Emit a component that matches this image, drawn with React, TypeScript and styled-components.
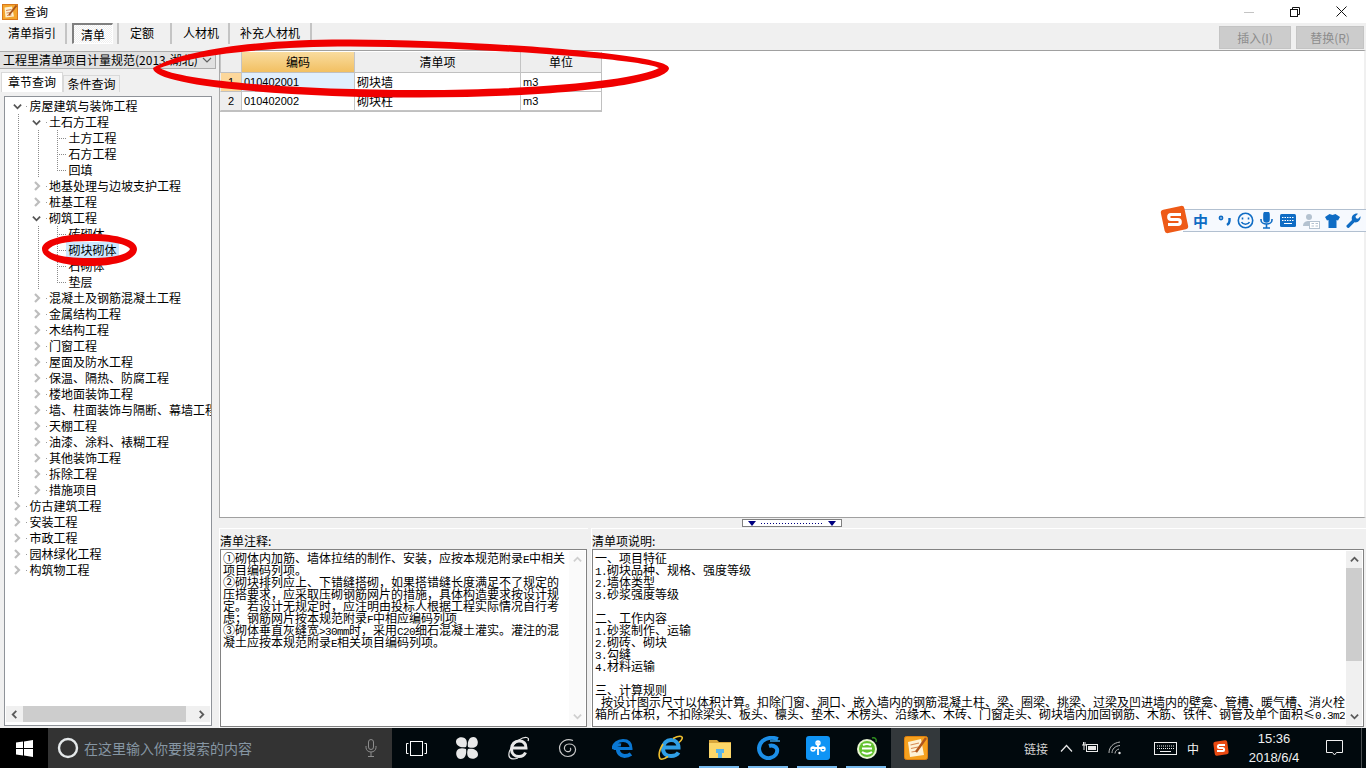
import React from "react";
import styled, { createGlobalStyle } from "styled-components";

const CJK = `"Noto Sans CJK SC", "Liberation Sans", sans-serif`;

const Global = createGlobalStyle`
  html, body { margin: 0; padding: 0; background: #fff; overflow: hidden; }
  * { box-sizing: border-box; }
  body { font-family: ${CJK}; font-size: 12px; color: #000; }
`;

const Screen = styled.div`
  position: relative;
  width: 1366px;
  height: 768px;
  overflow: hidden;
  display: flex;
  flex-direction: column;
`;

const TitleBar = styled.div`
  height: 23px;
  background: #fff;
  display: flex;
  align-items: center;
  padding-left: 2px;
`;
const AppTitle = styled.span`
  margin-left: 6px;
  line-height: 16px;
`;
const WindowControls = styled.div`
  margin-left: auto;
  display: flex;
  height: 23px;
  padding-right: 2px;
`;
const WinBtn = styled.div`
  width: 46px;
  display: flex;
  align-items: center;
  justify-content: center;
`;

const Toolbar = styled.div`
  height: 27px;
  background: #f0f0f0;
  display: flex;
  align-items: flex-start;
`;
const ToolTab = styled.div<{ $w: number; $pl: number }>`
  width: ${(p) => p.$w}px;
  height: 21px;
  padding-left: ${(p) => p.$pl}px;
  line-height: 20px;
  border-right: 2px solid #c4c4c4;
  white-space: nowrap;
`;
const ToolTabWrap = styled.div`
  width: 52px;
  height: 21px;
  padding-left: 5px;
  border-right: 2px solid #c4c4c4;
`;
const ActiveTab = styled.div`
  width: 41px;
  height: 21px;
  line-height: 20px;
  text-align: center;
  border: 1px solid;
  border-width: 2px 1px 1px 2px;
  border-color: #808080 #fff #fff #808080;
  background: repeating-conic-gradient(#fff 0 25%, #efefef 0 50%) 0 0 / 2px 2px;
`;
const ActionGroup = styled.div`
  margin-left: auto;
  display: flex;
  gap: 5px;
  padding: 3px 2px 0 0;
`;
const ActionButton = styled.div<{ $w: number }>`
  width: ${(p) => p.$w}px;
  height: 23px;
  background: #cccccc;
  border: 1px solid #c4c4c4;
  color: #8c8c8c;
  text-align: center;
  line-height: 21px;
`;

const Main = styled.div`
  flex: 1;
  display: flex;
  min-height: 0;
  background: #f0f0f0;
`;
const LeftPanel = styled.div`
  width: 219px;
  flex: none;
  display: flex;
  flex-direction: column;
  padding-top: 1px;
`;
const Combo = styled.div`
  width: 216px;
  height: 18px;
  background: #e1e1e1;
  border: 1px solid #adadad;
  border-left: 0;
  display: flex;
  align-items: center;
  padding-left: 3px;
  overflow: hidden;
  white-space: nowrap;
`;
const ComboText = styled.span`
  flex: 1;
  overflow: hidden;
  line-height: 16px;
`;
const ComboArrow = styled.div`
  flex: none;
  width: 17px;
  display: flex;
  justify-content: center;
`;
const TabStrip = styled.div`
  display: flex;
  align-items: flex-end;
  height: 20px;
  margin: 3px 0 4px 1px;
`;
const SideTab = styled.div<{ $active?: boolean }>`
  width: ${(p) => (p.$active ? 62 : 57)}px;
  height: ${(p) => (p.$active ? 20 : 17)}px;
  line-height: ${(p) => (p.$active ? 18 : 16)}px;
  text-align: center;
  background: ${(p) => (p.$active ? "#fff" : "#f0f0f0")};
  border: 1px solid #d9d9d9;
  border-bottom: 0;
`;
const TreeBox = styled.div`
  margin-left: 4px;
  width: 208px;
  height: 630px;
  background: #fff;
  border: 1px solid #8f9399;
  padding-top: 1px;
  display: flex;
  flex-direction: column;
`;
const TreeList = styled.div`
  flex: 1;
  overflow: hidden;
  padding-left: 3px;
`;
const TreeRow = styled.div`
  height: 16px;
  display: flex;
  align-items: center;
  white-space: nowrap;
`;
const Indent = styled.div`
  flex: none;
  width: 19.5px;
  height: 16px;
  background: repeating-linear-gradient(to bottom, #8a8a8a 0 1px, transparent 1px 2px) 10px 0 / 1px 100% no-repeat;
`;
const Elbow = styled.div<{ $last?: boolean }>`
  flex: none;
  width: 19.5px;
  height: 16px;
  background:
    repeating-linear-gradient(to bottom, #8a8a8a 0 1px, transparent 1px 2px) 10px 0 / 1px ${(p) => (p.$last ? "8px" : "100%")} no-repeat,
    repeating-linear-gradient(to right, #8a8a8a 0 1px, transparent 1px 2px) 10px 8px / 9px 1px no-repeat;
`;
const Toggle = styled.div`
  flex: none;
  width: 19.5px;
  height: 16px;
  display: flex;
  align-items: center;
  justify-content: center;
  padding-right: 1px;
  background: linear-gradient(#9a9a9a, #9a9a9a) 18px 8px / 1px 1px no-repeat;
`;
const TreeLabel = styled.span<{ $selected?: boolean }>`
  margin-left: ${(p) => (p.$selected ? "-0.5px" : "2px")};
  padding: 0 ${(p) => (p.$selected ? "2.5px" : "0")};
  background: ${(p) => (p.$selected ? "#cce8ff" : "transparent")};
  line-height: 16px;
`;
const HScroll = styled.div`
  height: 16px;
  margin: 0 1px 3px;
  background: #f0f0f0;
  display: flex;
  align-items: center;
`;
const ScrollCap = styled.div`
  flex: none;
  width: 17px;
  height: 16px;
  display: flex;
  align-items: center;
  justify-content: center;
`;
const HThumb = styled.div`
  width: 163px;
  height: 16px;
  background: #cdcdcd;
`;

const RightArea = styled.div`
  flex: 1;
  display: flex;
  flex-direction: column;
  min-width: 0;
`;
const GridPane = styled.div`
  height: 468px;
  background: #fff;
  border-top: 1px solid #a0a0a0;
  border-left: 1px solid #a9a9a9;
  border-bottom: 1px solid #a0a0a0;
  border-right: 2px solid #f0f0f0;
  padding-top: 1px;
`;
const Table = styled.div`
  display: grid;
  grid-template-columns: 21px 113px 166px 81px;
  grid-template-rows: 21px 19px 19px;
  width: 382px;
  border-bottom: 1px solid #c0c0c0;
  border-right: 1px solid #c0c0c0;
`;
const HeadCell = styled.div<{ $on?: boolean }>`
  background: ${(p) => (p.$on ? "linear-gradient(#f9dc9f, #f2c062)" : "#eeeeee")};
  border-left: 1px solid #c4c4c4;
  border-bottom: 1px solid #c0c0c0;
  text-align: center;
  line-height: 20px;
`;
const RowHead = styled.div<{ $on?: boolean }>`
  background: ${(p) => (p.$on ? "#fcd79b" : "#eeeeee")};
  border-left: 1px solid #eeeeee;
  border-bottom: 1px solid #c0c0c0;
  text-align: center;
  font-family: "Liberation Sans", sans-serif;
  font-size: 11px;
  line-height: 19px;
`;
const Cell = styled.div<{ $on?: boolean; $num?: boolean }>`
  background: ${(p) => (p.$on ? "#e0effd" : "#fff")};
  border-left: 1px solid #c4c4c4;
  border-bottom: 1px solid #c4c4c4;
  padding-left: 2px;
  white-space: nowrap;
  line-height: ${(p) => (p.$num ? "19px" : "18px")};
  font-family: ${(p) => (p.$num ? `"Liberation Sans", sans-serif` : CJK)};
  font-size: ${(p) => (p.$num ? "11px" : "12px")};
`;
const Splitter = styled.div`
  height: 10px;
  flex: none;
  display: flex;
  justify-content: center;
  padding: 1px 2px 0 0;
`;
const SplitHandle = styled.div`
  width: 100px;
  height: 8px;
  background: #fff;
  border: 1px solid #808080;
  display: flex;
  align-items: center;
  justify-content: space-between;
  padding: 0 5px;
`;
const SplitDots = styled.div`
  flex: 1;
  height: 1px;
  margin: 0 5px;
  background: repeating-linear-gradient(to right, #000080 0 1px, transparent 1px 3px);
`;
const NotesRow = styled.div`
  flex: 1;
  display: flex;
  gap: 3px;
  min-height: 0;
`;
const NotePanel = styled.div<{ $grow?: boolean }>`
  ${(p) => (p.$grow ? "flex: 1;" : "width: 369px; flex: none;")}
  display: flex;
  flex-direction: column;
  border-top: 1px solid #fff;
  border-left: 1px solid #fff;
  padding: 0 ${(p) => (p.$grow ? "2px" : "1px")} 1px 0;
`;
const NoteLabel = styled.div`
  height: 20px;
  line-height: 24px;
  white-space: nowrap;
`;
const NoteBox = styled.div`
  flex: 1;
  display: flex;
  background: #fff;
  border: 1px solid #828282;
  min-height: 0;
`;
const NoteText = styled.div`
  flex: 1;
  padding: 2px 0 0 2px;
  line-height: 12px;
  overflow: hidden;
  min-width: 0;
`;
const NoteLine = styled.div`
  height: 12px;
  white-space: pre;
`;
const HalfWidth = styled.span`
  font-family: "Liberation Mono", monospace;
  font-size: 11px;
  letter-spacing: -0.6px;
`;
const VScroll = styled.div<{ $on?: boolean }>`
  flex: none;
  width: 16px;
  margin: 1px;
  background: ${(p) => (p.$on ? "#f0f0f0" : "#fafafa")};
  display: flex;
  flex-direction: column;
`;
const VCap = styled.div`
  flex: none;
  height: 17px;
  display: flex;
  align-items: center;
  justify-content: center;
`;
const VThumb = styled.div`
  height: 93px;
  background: #cdcdcd;
`;
const VFill = styled.div`
  flex: 1;
`;

const Taskbar = styled.div`
  height: 40px;
  flex: none;
  background: #01090d;
  display: flex;
  align-items: center;
  color: #fff;
`;
const StartBtn = styled.div`
  width: 48px;
  height: 40px;
  background: #000;
  display: flex;
  align-items: center;
  justify-content: center;
`;
const SearchBox = styled.div`
  width: 344px;
  height: 40px;
  background: #333333;
  display: flex;
  align-items: center;
  padding-left: 9px;
`;
const SearchHint = styled.span`
  margin-left: 5px;
  font-size: 14px;
  color: #8696a3;
`;
const MicSlot = styled.div`
  margin-left: auto;
  margin-right: 15px;
  display: flex;
`;
const TaskIcon = styled.div<{ $active?: boolean; $open?: boolean; $ml?: number }>`
  position: relative;
  width: 49px;
  height: 40px;
  flex: none;
  margin-left: ${(p) => p.$ml ?? 0}px;
  display: flex;
  align-items: center;
  justify-content: center;
  background: ${(p) => (p.$active ? "#33383b" : "transparent")};
  ${(p) =>
    p.$open
      ? `&::after {
    content: "";
    position: absolute;
    left: 4px;
    bottom: 0;
    width: 40px;
    height: 2px;
    background: #76b9ed;
  }`
      : ""}
`;
const Tray = styled.div`
  margin-left: auto;
  display: flex;
  align-items: center;
  height: 40px;
`;
const TrayText = styled.span<{ $ml: number; $bright?: boolean }>`
  margin-left: ${(p) => p.$ml}px;
  color: ${(p) => (p.$bright ? "#f4f4f4" : "#d4d4d4")};
  white-space: nowrap;
`;
const TraySlot = styled.div<{ $ml: number }>`
  margin-left: ${(p) => p.$ml}px;
  display: flex;
  align-items: center;
`;
const Clock = styled.div`
  width: 62px;
  margin-left: 14px;
  text-align: center;
  font-family: "Liberation Sans", sans-serif;
  font-size: 13px;
  line-height: 19px;
  color: #f0f0f0;
`;
const NotifySlot = styled.div`
  width: 49px;
  margin-left: 8px;
  height: 40px;
  display: flex;
  align-items: center;
  justify-content: center;
  padding-right: 5px;
  border-right: 1px solid #4a4f52;
  margin-right: 4px;
`;

const Ime = styled.div`
  position: absolute;
  left: 1160px;
  top: 205px;
  width: 206px;
  height: 30px;
  display: flex;
  align-items: center;
`;
const ImeBar = styled.div`
  position: absolute;
  left: 23px;
  right: 0;
  top: 4px;
  height: 23px;
  background: #f6f9fe;
  border-top: 1px solid #b2c0d0;
  border-bottom: 1px solid #b2c0d0;
  display: flex;
  align-items: center;
  padding-left: 10px;
  color: #0f6cc4;
`;
const ImeChar = styled.span`
  width: 18px;
  font-size: 15px;
  font-weight: 700;
  line-height: 20px;
  margin-right: 4px;
`;
const ImeIcon = styled.div<{ $w: number }>`
  width: ${(p) => p.$w}px;
  display: flex;
  justify-content: center;
`;
const ImeLogo = styled.div`
  position: absolute;
  left: 0;
  top: 0;
  z-index: 1;
  display: flex;
`;
const Marks = styled.svg`
  position: absolute;
  left: 0;
  top: 0;
  pointer-events: none;
`;

const Chev = ({ d, c = "#5a5a5a", s = 9, w = 2 }: { d: "up" | "down" | "left" | "right"; c?: string; s?: number; w?: number }) => {
  const p = {
    up: "M1 7 L5 3 L9 7",
    down: "M1 3 L5 7 L9 3",
    left: "M7 1 L3 5 L7 9",
    right: "M3 1 L7 5 L3 9",
  }[d];
  return (
    <svg width={s} height={s} viewBox="0 0 10 10">
      <path d={p} fill="none" stroke={c} strokeWidth={w} />
    </svg>
  );
};

const Mixed = ({ text }: { text: string }) => (
  <>
    {text.split(/([\x20-\x7e]+)/).map((part, i) =>
      /^[\x20-\x7e]+$/.test(part) ? <HalfWidth key={i}>{part}</HalfWidth> : part
    )}
  </>
);

type Node = { t: string; d: 0 | 1 | 2; open?: boolean; leaf?: boolean; last?: boolean; sel?: boolean };
const tree: Node[] = [
  { t: "房屋建筑与装饰工程", d: 0, open: true },
  { t: "土石方工程", d: 1, open: true },
  { t: "土方工程", d: 2, leaf: true },
  { t: "石方工程", d: 2, leaf: true },
  { t: "回填", d: 2, leaf: true, last: true },
  { t: "地基处理与边坡支护工程", d: 1 },
  { t: "桩基工程", d: 1 },
  { t: "砌筑工程", d: 1, open: true },
  { t: "砖砌体", d: 2, leaf: true },
  { t: "砌块砌体", d: 2, leaf: true, sel: true },
  { t: "石砌体", d: 2, leaf: true },
  { t: "垫层", d: 2, leaf: true, last: true },
  { t: "混凝土及钢筋混凝土工程", d: 1 },
  { t: "金属结构工程", d: 1 },
  { t: "木结构工程", d: 1 },
  { t: "门窗工程", d: 1 },
  { t: "屋面及防水工程", d: 1 },
  { t: "保温、隔热、防腐工程", d: 1 },
  { t: "楼地面装饰工程", d: 1 },
  { t: "墙、柱面装饰与隔断、幕墙工程", d: 1 },
  { t: "天棚工程", d: 1 },
  { t: "油漆、涂料、裱糊工程", d: 1 },
  { t: "其他装饰工程", d: 1 },
  { t: "拆除工程", d: 1 },
  { t: "措施项目", d: 1 },
  { t: "仿古建筑工程", d: 0 },
  { t: "安装工程", d: 0 },
  { t: "市政工程", d: 0 },
  { t: "园林绿化工程", d: 0 },
  { t: "构筑物工程", d: 0 },
];

const notes = [
  "①砌体内加筋、墙体拉结的制作、安装，应按本规范附录E中相关",
  "项目编码列项。",
  "②砌块排列应上、下错缝搭砌，如果搭错缝长度满足不了规定的",
  "压搭要求，应采取压砌钢筋网片的措施，具体构造要求按设计规",
  "定。若设计无规定时，应注明由投标人根据工程实际情况自行考",
  "虑；钢筋网片按本规范附录F中相应编码列项",
  "③砌体垂直灰缝宽>30mm时，采用C20细石混凝土灌实。灌注的混",
  "凝土应按本规范附录E相关项目编码列项。",
];
const spec = [
  "一、项目特征",
  "1.砌块品种、规格、强度等级",
  "2.墙体类型",
  "3.砂浆强度等级",
  " ",
  "二、工作内容",
  "1.砂浆制作、运输",
  "2.砌砖、砌块",
  "3.勾缝",
  "4.材料运输",
  " ",
  "三、计算规则",
  " 按设计图示尺寸以体积计算。扣除门窗、洞口、嵌入墙内的钢筋混凝土柱、梁、圈梁、挑梁、过梁及凹进墙内的壁龛、管槽、暖气槽、消火栓",
  "箱所占体积，不扣除梁头、板头、檩头、垫木、木楞头、沿缘木、木砖、门窗走头、砌块墙内加固钢筋、木筋、铁件、钢管及单个面积≤0.3m2",
];

const TitleLogo = () => (
  <svg width="16" height="16" viewBox="0 0 16 16">
    <rect x="0.5" y="0.5" width="15" height="15" fill="#f4a52c" stroke="#d9781a" />
    <path d="M2.5 3.5L10 2.5L12 12.5L3.5 13.5Z" fill="#fdf0cf" />
    <path d="M4 6.5L9.5 5.5M4.5 9L9 8.5M5 11.5L9.5 11" stroke="#d6885a" />
    <path d="M14.5 1.5L7 11" stroke="#a9541c" strokeWidth="2" />
  </svg>
);

const NoteIcon = ({ size = 24 }: { size?: number }) => (
  <svg width={size} height={size} viewBox="0 0 24 24">
    <rect x="0.5" y="0.5" width="23" height="23" rx="2" fill="#f5a11f" stroke="#e0810f" />
    <path d="M4 6 L17 3 L20 19 L6 21 Z" fill="#fdf2d6" />
    <path d="M6.5 9 L15 7 M7 12.5 L14 11 M7.5 16 L13 15" stroke="#d88c55" strokeWidth="1.2" />
    <path d="M22 2 L12 16" stroke="#b2561a" strokeWidth="2.4" />
  </svg>
);

export default function App() {
  return (
    <Screen>
      <Global />
      <TitleBar>
        <TitleLogo />
        <AppTitle>查询</AppTitle>
        <WindowControls>
          <WinBtn>
            <svg width="10" height="10" viewBox="0 0 10 10"><path d="M0 5.5H10" stroke="#c4c4c4" /></svg>
          </WinBtn>
          <WinBtn>
            <svg width="10" height="10" viewBox="0 0 10 10" fill="none" stroke="#111">
              <path d="M2.5 2.5V0.5H9.5V7.5H7.5" />
              <rect x="0.5" y="2.5" width="7" height="7" />
            </svg>
          </WinBtn>
          <WinBtn>
            <svg width="11" height="11" viewBox="0 0 11 11" fill="none" stroke="#111"><path d="M0.5 0.5L10.5 10.5M10.5 0.5L0.5 10.5" /></svg>
          </WinBtn>
        </WindowControls>
      </TitleBar>

      <Toolbar>
        <ToolTab $w={67} $pl={8}>清单指引</ToolTab>
        <ToolTabWrap><ActiveTab>清单</ActiveTab></ToolTabWrap>
        <ToolTab $w={53} $pl={11}>定额</ToolTab>
        <ToolTab $w={58} $pl={11}>人材机</ToolTab>
        <ToolTab $w={82} $pl={10}>补充人材机</ToolTab>
        <ActionGroup>
          <ActionButton $w={72}>插入(I)</ActionButton>
          <ActionButton $w={68}>替换(R)</ActionButton>
        </ActionGroup>
      </Toolbar>

      <Main>
        <LeftPanel>
          <Combo>
            <ComboText>工程里清单项目计量规范(2013-湖北)</ComboText>
            <ComboArrow><Chev d="down" c="#606060" s={10} w={1.2} /></ComboArrow>
          </Combo>
          <TabStrip>
            <SideTab $active>章节查询</SideTab>
            <SideTab>条件查询</SideTab>
          </TabStrip>
          <TreeBox>
            <TreeList>
              {tree.map((n, i) => (
                <TreeRow key={i}>
                  {n.d >= 1 && <Indent />}
                  {n.d === 2 && <Indent />}
                  {n.leaf ? (
                    <Elbow $last={n.last} />
                  ) : (
                    <Toggle>
                      {n.open ? <Chev d="down" c="#555" s={9} w={2} /> : <Chev d="right" c="#bdbdbd" s={10} w={2.2} />}
                    </Toggle>
                  )}
                  <TreeLabel $selected={n.sel}>{n.t}</TreeLabel>
                </TreeRow>
              ))}
            </TreeList>
            <HScroll>
              <ScrollCap><Chev d="left" /></ScrollCap>
              <HThumb />
              <VFill />
              <ScrollCap><Chev d="right" /></ScrollCap>
            </HScroll>
          </TreeBox>
        </LeftPanel>

        <RightArea>
          <GridPane>
            <Table>
              <HeadCell />
              <HeadCell $on>编码</HeadCell>
              <HeadCell>清单项</HeadCell>
              <HeadCell>单位</HeadCell>
              <RowHead $on>1</RowHead>
              <Cell $on $num>010402001</Cell>
              <Cell>砌块墙</Cell>
              <Cell $num>m3</Cell>
              <RowHead>2</RowHead>
              <Cell $num>010402002</Cell>
              <Cell>砌块柱</Cell>
              <Cell $num>m3</Cell>
            </Table>
          </GridPane>
          <Splitter>
            <SplitHandle>
              <svg width="8" height="5" viewBox="0 0 8 5"><path d="M0 0H8L4 5Z" fill="#000080" /></svg>
              <SplitDots />
              <svg width="8" height="5" viewBox="0 0 8 5"><path d="M0 0H8L4 5Z" fill="#000080" /></svg>
            </SplitHandle>
          </Splitter>
          <NotesRow>
            <NotePanel>
              <NoteLabel>清单注释:</NoteLabel>
              <NoteBox>
                <NoteText>
                  {notes.map((l, i) => <NoteLine key={i}><Mixed text={l} /></NoteLine>)}
                </NoteText>
                <VScroll>
                  <VCap><Chev d="up" c="#cfcfcf" /></VCap>
                  <VFill />
                  <VCap><Chev d="down" c="#cfcfcf" /></VCap>
                </VScroll>
              </NoteBox>
            </NotePanel>
            <NotePanel $grow>
              <NoteLabel>清单项说明:</NoteLabel>
              <NoteBox>
                <NoteText>
                  {spec.map((l, i) => <NoteLine key={i}><Mixed text={l} /></NoteLine>)}
                </NoteText>
                <VScroll $on>
                  <VCap><Chev d="up" /></VCap>
                  <VThumb />
                  <VFill />
                  <VCap><Chev d="down" /></VCap>
                </VScroll>
              </NoteBox>
            </NotePanel>
          </NotesRow>
        </RightArea>
      </Main>

      <Taskbar>
        <StartBtn>
          <svg width="17" height="17" viewBox="0 0 17 17" fill="#fff">
            <path d="M0 2.6L7 1.6V8H0ZM8 1.4L17 0V8H8ZM0 9H7V15.4L0 14.4ZM8 9H17V17L8 15.6Z" />
          </svg>
        </StartBtn>
        <SearchBox>
          <svg width="22" height="22" viewBox="0 0 22 22">
            <circle cx="11" cy="11" r="9" fill="none" stroke="#e4e8ea" strokeWidth="2.4" />
          </svg>
          <SearchHint>在这里输入你要搜索的内容</SearchHint>
          <MicSlot>
            <svg width="12" height="18" viewBox="0 0 12 18" fill="none" stroke="#8d8d8d">
              <rect x="3.5" y="0.5" width="5" height="10" rx="2.5" />
              <path d="M1 7V8.5C1 11 3 13 6 13C9 13 11 11 11 8.5V7M6 13V17M3 17.5H9" />
            </svg>
          </MicSlot>
        </SearchBox>
        <TaskIcon>
          <svg width="21" height="15" viewBox="0 0 21 15" fill="none" stroke="#fff">
            <rect x="4.5" y="0.5" width="12" height="14" />
            <path d="M2.5 2.5H0.5V12.5H2.5M18.5 2.5H20.5V12.5H18.5" />
          </svg>
        </TaskIcon>
        <TaskIcon $ml={1}>
          <svg width="24" height="24" viewBox="0 0 24 24" fill="#e8e8e8">
            <path d="M11 11C6 12 1 10 1 5.5C1 2 6 0 9.5 2C12 3.5 12.5 7.5 11 11Z" />
            <path d="M13 11C12 6 14 1 18.5 1C22 1 24 6 22 9.5C20.5 12 16.5 12.5 13 11Z" />
            <path d="M13 13C18 12 23 14 23 18.5C23 22 18 24 14.5 22C12 20.5 11.5 16.5 13 13Z" />
            <path d="M11 13C12 18 10 23 5.5 23C2 23 0 18 2 14.5C3.5 12 7.5 11.5 11 13Z" />
          </svg>
        </TaskIcon>
        <TaskIcon $ml={3}>
          <svg width="24" height="24" viewBox="0 0 24 24" fill="none" stroke="#e8e8e8">
            <path d="M5 12H19C19 7 16 5 12 5C8 5 4.5 8 4.5 13C4.5 18 8 20.5 12 20.5C15 20.5 17.5 19 18.5 16.5" strokeWidth="3" />
            <path d="M21 5C23 1 18 0 12 4C6 8 1 15 2 20C3 24 8 23 11 22" strokeWidth="1.2" />
          </svg>
        </TaskIcon>
        <TaskIcon>
          <svg width="20" height="20" viewBox="0 0 20 20" fill="none" stroke="#c9c9c9" strokeWidth="1.2">
            <path d="M15 2.5C9 0 2 3 1.5 10C1.5 15 5.5 18.5 10 18.5C14.5 18.5 18 15 17.5 11C17 7.5 14 6 11 6C8 6 6 8 6.5 11C7 13.5 10 14.5 12 13C13 12 13 10.5 12 10" />
          </svg>
        </TaskIcon>
        <TaskIcon $ml={6}>
          <svg width="22" height="22" viewBox="0 0 22 22" fill="none" stroke="#0a78d4">
            <path d="M2 11.5H19C19 6 16 3.5 11 3.5C6 3.5 1.5 6.5 1 12C3 8.5 6 7.5 9 8" strokeWidth="3" />
            <path d="M6 11.5C5.5 16 9 19 12.5 19C15 19 17 18.5 19 17" strokeWidth="4" />
          </svg>
        </TaskIcon>
        <TaskIcon $ml={-1}>
          <svg width="26" height="26" viewBox="0 0 26 26" fill="none">
            <path d="M6.5 12.5H20.5C20.5 7.5 17 5 13 5C8.5 5 5 8.5 5 13.5C5 18.5 8.5 21 13 21C16.5 21 19 20 20.5 17.5" stroke="#2f9fe6" strokeWidth="4" />
            <path d="M23 1.5C25.5 2 24 5 21 7.5M5 9C2 14 0 20 2 23.5C3.5 25 7 23.5 10 21.5" stroke="#f0c030" strokeWidth="1.6" />
            <path d="M15 3.5C19 1.5 22 1 23 1.5" stroke="#f0c030" strokeWidth="1.6" />
          </svg>
        </TaskIcon>
        <TaskIcon $open>
          <svg width="22" height="19" viewBox="0 0 22 19">
            <path d="M0 1H8L10 3H22V5H0Z" fill="#d8a63c" />
            <rect x="0" y="4" width="22" height="15" fill="#fbd669" />
            <path d="M7 10H15V14H13V19H9V14H7Z" fill="#58b4e8" />
          </svg>
        </TaskIcon>
        <TaskIcon $open>
          <svg width="24" height="24" viewBox="0 0 24 24" fill="none">
            <path d="M21 3C13 0 3 3 2 12C2 19 8 23 13 22C18 21 21 17 20 13C19 10 15 9 12 10" stroke="#1c8fe8" strokeWidth="4" />
            <path d="M13 5H23" stroke="#3aa9f3" strokeWidth="1.4" />
          </svg>
        </TaskIcon>
        <TaskIcon $open>
          <svg width="24" height="24" viewBox="0 0 24 24">
            <rect width="24" height="24" rx="3" fill="#0f94f5" />
            <path d="M12 5V19M5 12H19" stroke="#fff" strokeWidth="1.8" fill="none" />
            <circle cx="12" cy="7" r="2" fill="none" stroke="#fff" strokeWidth="1.4" />
            <circle cx="7" cy="13" r="2" fill="none" stroke="#fff" strokeWidth="1.4" />
            <circle cx="17" cy="13" r="2" fill="none" stroke="#fff" strokeWidth="1.4" />
          </svg>
        </TaskIcon>
        <TaskIcon $open>
          <svg width="24" height="24" viewBox="0 0 24 24" fill="none">
            <circle cx="12" cy="13" r="10" fill="#e8f7d2" />
            <circle cx="12" cy="13" r="8" fill="#62c12e" />
            <path d="M7 12.5H17M7 16C10 18 14 18 17 16M8 9C10 8 14 8 16 9" stroke="#fff" strokeWidth="2" />
            <path d="M17 2C20 1 22 3 21 6" stroke="#2f8e1f" strokeWidth="1.4" />
          </svg>
        </TaskIcon>
        <TaskIcon $active>
          <NoteIcon />
        </TaskIcon>
        <Tray>
          <TrayText $ml={0}>链接</TrayText>
          <TraySlot $ml={12}>
            <svg width="13" height="8" viewBox="0 0 13 8" fill="none" stroke="#e8e8e8" strokeWidth="1.2"><path d="M1 7.5L6.5 1.5L12 7.5" /></svg>
          </TraySlot>
          <TraySlot $ml={9}>
            <svg width="17" height="12" viewBox="0 0 17 12" fill="none" stroke="#e8e8e8">
              <rect x="4.5" y="2.5" width="11" height="7" />
              <rect x="6" y="4" width="8" height="4" fill="#e8e8e8" stroke="none" />
              <path d="M0 3H4M1.5 0V3M3 0V3M2 3V8" />
            </svg>
          </TraySlot>
          <TraySlot $ml={9}>
            <svg width="14" height="14" viewBox="0 0 14 14" fill="none" stroke="#b8b8b8">
              <path d="M1 12C1 6 5 2 12 1M4 12C4 8 7 5 12 4.5M7 12.5C7 10 9 8.5 11 8" />
              <circle cx="11.5" cy="12" r="1.2" fill="#e8e8e8" stroke="none" />
            </svg>
          </TraySlot>
          <TraySlot $ml={32}>
            <svg width="23" height="13" viewBox="0 0 23 13" fill="none" stroke="#f0f0f0">
              <rect x="0.5" y="0.5" width="22" height="12" />
              <path d="M3 4H20M3 6.5H20" strokeDasharray="1 1" />
              <path d="M6 9.5H17" />
            </svg>
          </TraySlot>
          <TrayText $ml={10} $bright>中</TrayText>
          <TraySlot $ml={14}>
            <svg width="16" height="16" viewBox="0 0 16 16">
              <rect x="1" y="1" width="14" height="14" rx="2" fill="#ea4a12" transform="rotate(-8 8 8)" />
              <path d="M12 5H6C4.5 5 4.5 8 6 8H10C11.5 8 11.5 11 10 11H4" fill="none" stroke="#fff" strokeWidth="2" />
            </svg>
          </TraySlot>
          <Clock>15:36<br />2018/6/4</Clock>
          <NotifySlot>
            <svg width="17" height="16" viewBox="0 0 17 16" fill="none" stroke="#f0f0f0">
              <path d="M0.5 0.5H16.5V12.5H10.5L8.5 15L6.5 12.5H0.5Z" />
            </svg>
          </NotifySlot>
        </Tray>
      </Taskbar>

      <Ime>
        <ImeLogo>
          <svg width="29" height="29" viewBox="0 0 29 29">
            <rect x="2.5" y="2.5" width="24" height="24" rx="3" fill="#ee5a17" transform="rotate(-12 14.5 14.5)" />
            <path d="M21 9.5H11C8 9.5 8 14.5 11 14.5H18C21 14.5 21 19.5 18 19.5H8" fill="none" stroke="#fff" strokeWidth="3.2" />
          </svg>
        </ImeLogo>
        <ImeBar>
          <ImeChar>中</ImeChar>
          <ImeIcon $w={20}>
            <svg width="14" height="12" viewBox="0 0 14 12" fill="none" stroke="#0f6cc4" strokeWidth="1.6">
              <circle cx="3" cy="3" r="1.6" />
              <path d="M11.5 3V6C11.5 8 10.5 9 9 10" strokeWidth="2.4" />
            </svg>
          </ImeIcon>
          <ImeIcon $w={22}>
            <svg width="17" height="17" viewBox="0 0 17 17" fill="none" stroke="#0f6cc4" strokeWidth="1.6">
              <circle cx="8.5" cy="8.5" r="7.2" />
              <path d="M5.5 5.5V7.5M11.5 5.5V7.5" />
              <path d="M4.5 10C6 13 11 13 12.5 10" />
            </svg>
          </ImeIcon>
          <ImeIcon $w={22}>
            <svg width="13" height="17" viewBox="0 0 13 17" fill="none" stroke="#0f6cc4" strokeWidth="1.6">
              <rect x="4" y="0" width="5" height="10" rx="2.5" fill="#0f6cc4" />
              <path d="M1 7V8C1 10.5 3.5 12 6.5 12C9.5 12 12 10.5 12 8V7M6.5 12V15.5M3 16H10" />
            </svg>
          </ImeIcon>
          <ImeIcon $w={22}>
            <svg width="16" height="13" viewBox="0 0 16 13">
              <rect width="16" height="13" rx="1.5" fill="#0f6cc4" />
              <path d="M2 3.5H14M2 6.5H14" stroke="#fff" strokeDasharray="1.5 1" />
              <path d="M4 9.5H12" stroke="#fff" />
            </svg>
          </ImeIcon>
          <ImeIcon $w={26}>
            <svg width="17" height="16" viewBox="0 0 17 16">
              <circle cx="6" cy="4" r="3" fill="#b4c2d0" />
              <path d="M0 13C0 9 3 8 6 8C8 8 9 8.5 10 9V13Z" fill="#b4c2d0" />
              <rect x="6.5" y="8.5" width="10" height="7" fill="#fff" stroke="#b4c2d0" />
              <path d="M8.5 10.5H11M8.5 13H11M12.5 10.5H15M12.5 13H15" stroke="#b4c2d0" />
            </svg>
          </ImeIcon>
          <ImeIcon $w={16}>
            <svg width="15" height="14" viewBox="0 0 15 14">
              <path d="M4.5 0L7.5 1L10.5 0L15 3L13 6.5L11.5 6V14H3.5V6L2 6.5L0 3Z" fill="#0f6cc4" />
            </svg>
          </ImeIcon>
          <ImeIcon $w={26}>
            <svg width="15" height="15" viewBox="0 0 15 15">
              <path d="M0.5 12.5L6 7C5 4 7 0.5 11 0.5L12 0.7L9.5 3.2L10 5.2L12 5.7L14.5 3.2C15 7 12 10 8.5 9.3L3 14.7C1.5 15.5 0 14 0.5 12.5Z" fill="#0f6cc4" />
            </svg>
          </ImeIcon>
        </ImeBar>
      </Ime>

      <Marks width="1366" height="768" viewBox="0 0 1366 768">
        <path
          fillRule="evenodd"
          fill="#f00000"
          d="M153 68 C185 48 270 39 350 39.5 C480 40 669 54 669 68 C669 84 560 97.5 420 97.5 C285 97.5 153 86 153 68 Z
             M160 68 C195 54 275 46.5 350 46.5 C480 47 640 59 659 68 C640 79 545 90 420 90 C290 90 178 80 160 68 Z"
        />
        <path
          fillRule="evenodd"
          fill="#f00000"
          d="M42 249 C42 240 62 234 90 234 C118 234 137 240 137 249 C137 259 118 266 90 266 C62 266 42 259 42 249 Z
             M48 250 C52 244 66 241 90 241 C112 241 127 244 130 249 C127 255 112 258 90 258 C66 258 52 255 48 250 Z"
        />
      </Marks>
    </Screen>
  );
}
